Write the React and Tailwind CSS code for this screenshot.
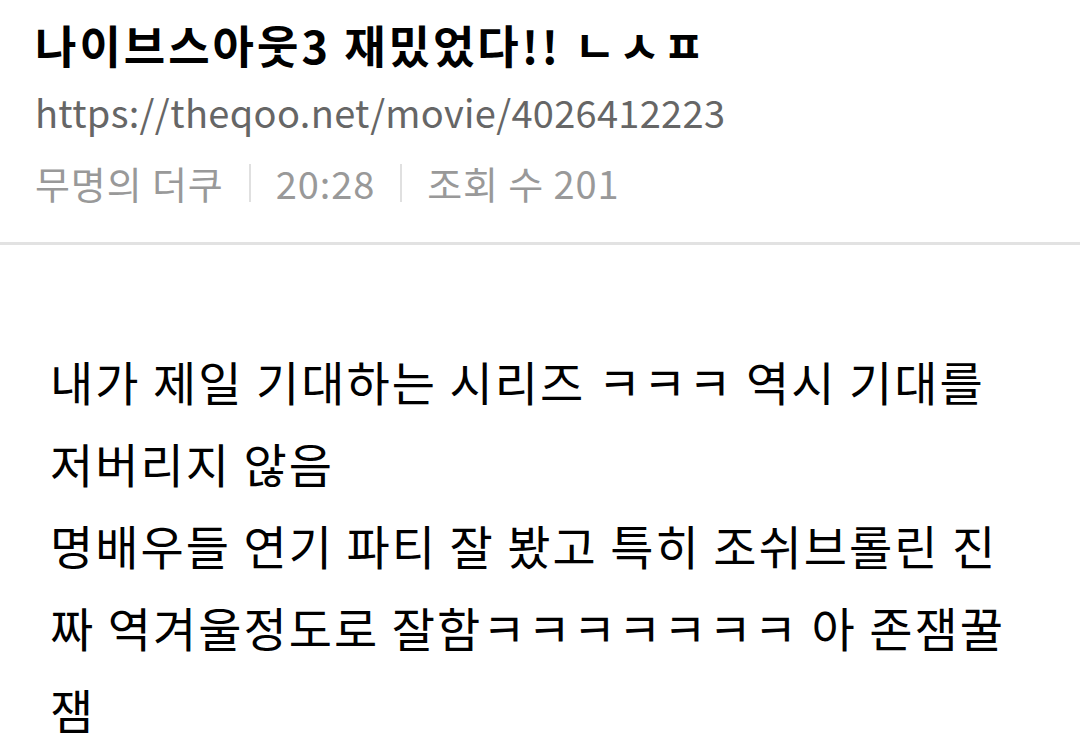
import React from 'react'

const font = { fontFamily: '"Noto Sans CJK KR", "Noto Sans", sans-serif' }

const App = () => {
    return (
        <div className="w-[1080px] min-h-[741px] bg-white" style={font}>
            {/* 헤더 */}
            <div className="px-[35px] pt-[15px] pb-[34px]">
                <h1 className="text-[45px] leading-[60px] font-bold text-black tracking-[3px]">
                    나이브스아웃3 재밌었다!! ㄴㅅㅍ
                </h1>
                <p className="mt-[12px] text-[38px] leading-[50px] text-[#666666] tracking-[0.3px]">
                    https://theqoo.net/movie/4026412223
                </p>
                <div className="mt-[21px] flex items-center text-[38px] leading-[50px] text-[#999999] tracking-[0.9px]">
                    <span>무명의 더쿠</span>
                    <span className="mx-[25px] w-[2px] h-[38px] bg-[#e0e0e0]" />
                    <span>20:28</span>
                    <span className="mx-[25px] w-[2px] h-[38px] bg-[#e0e0e0]" />
                    <span>조회 수 201</span>
                </div>
            </div>

            <div className="h-[3px] bg-[#e2e2e2]" />

            {/* 본문 */}
            <div className="pl-[50px] pr-[50px] pt-[95px] pb-[20px] text-[47px] leading-[82px] tracking-[2px] text-black">
                <p>내가 제일 기대하는 시리즈 ㅋㅋㅋ 역시 기대를 저버리지 않음</p>
                <p>명배우들 연기 파티 잘 봤고 특히 조쉬브롤린 진짜 역겨울정도로 잘함ㅋㅋㅋㅋㅋㅋㅋ 아 존잼꿀잼</p>
            </div>
        </div>
    )
}

export default App
